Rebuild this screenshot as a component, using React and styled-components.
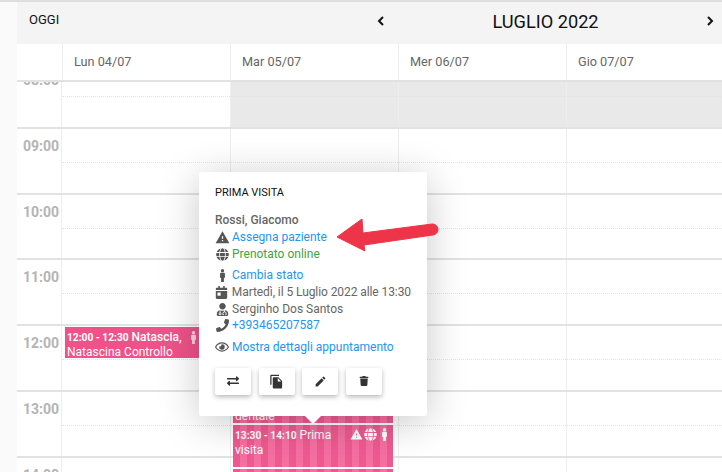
import React from 'react'
import styled, { createGlobalStyle } from 'styled-components'
import { FaGlobe, FaMale, FaPhone, FaRegEye, FaExchangeAlt, FaTrash, FaUserMd, FaCalendarDay } from 'react-icons/fa'
import { MdWarning, MdFileCopy, MdEdit } from 'react-icons/md'

const Global = createGlobalStyle`
  html, body { margin: 0; height: 100%; overflow: hidden; background: #fafafa; }
  body { font-family: Roboto, "Liberation Sans", sans-serif; }
  * { box-sizing: border-box; }
`

const Page = styled.div`
  display: flex;
  height: 472px;
  border-top: 2px solid #dedede;
`
const Side = styled.div`
  width: 17px;
  flex: none;
  background: #fafafa;
`
const Main = styled.div`
  position: relative;
  flex: 1;
  min-width: 0;
  display: flex;
  flex-direction: column;
  overflow: hidden;
  background: #fff;
`
const Toolbar = styled.div`
  height: 42px;
  flex: none;
  display: flex;
  align-items: center;
  justify-content: space-between;
  padding: 0 3px 4px 12px;
  background: #f4f4f4;
  color: #111;
`
const Today = styled.div`
  font-size: 13px;
  margin-top: -3px;
`
const Month = styled.div`
  width: 347px;
  display: flex;
  align-items: center;
  justify-content: space-between;
  font-size: 18.2px;
`
const Chevron = styled.svg`
  width: 18px;
  height: 18px;
  fill: none;
  stroke: currentColor;
  stroke-width: 2;
`
const DaysHead = styled.div`
  height: 38px;
  flex: none;
  display: grid;
  grid-template-columns: 46px repeat(4, 168px);
  border-bottom: 2px solid #e2e2e2;
  background: #fff;
  position: relative;
  z-index: 1;
`
const DayName = styled.div`
  border-right: 1px solid #eee;
  padding: 10px 0 0 11px;
  font-size: 12.7px;
  color: #666;
`
const Body = styled.div`
  margin-top: -19px;
`
const Row = styled.div`
  height: 65.8px;
  display: grid;
  grid-template-columns: 45px 169px repeat(3, 168px);
  border-bottom: 2px solid #e2e2e2;
`
const Hour = styled.div`
  border-right: 1px solid #eee;
  padding: 9px 0 0 6px;
  font-size: 14px;
  line-height: 16px;
  font-weight: 700;
  color: #b4b4b4;
`
const Cell = styled.div`
  position: relative;
  border-right: 1px solid #eee;
  background: ${p => p.$closed ? '#e9e9e9' : '#fff'};
  &::after {
    content: '';
    position: absolute;
    left: 0;
    right: 0;
    top: 33px;
    border-top: 1px dotted #e4e4e4;
  }
`
const Event = styled.div`
  position: absolute;
  z-index: 1;
  left: ${p => p.$left}px;
  top: ${p => p.$top}px;
  width: ${p => p.$width}px;
  height: ${p => p.$height}px;
  padding: ${p => p.$pad || 3}px 2px 0 2px;
  color: #fff;
  font-size: 12px;
  line-height: 15px;
  overflow: hidden;
  background: ${p => p.$striped
    ? 'repeating-linear-gradient(90deg, #ee5a90 0 7px, #f56fa1 7px 14px)'
    : '#ef5289'};
  b { font-weight: 700; font-size: 10.2px; }
  strong { font-weight: 500; }
`
const EventIcons = styled.div`
  float: right;
  display: flex;
  gap: 1px;
  align-items: center;
  margin-right: ${p => p.$gap}px;
  font-size: 13px;
  height: 14px;
  opacity: ${p => p.$faded ? 0.75 : 1};
`
const Popover = styled.div`
  position: absolute;
  z-index: 2;
  left: 182px;
  top: 170px;
  width: 228px;
  height: 244px;
  padding: 12px 16px;
  background: #fff;
  border-radius: 2px;
  box-shadow: 0 6px 40px rgba(0, 0, 0, .22);
  font-size: 12px;
  line-height: 17px;
  color: #666;
  &::after {
    content: '';
    position: absolute;
    left: 106px;
    bottom: -8px;
    border-left: 8px solid transparent;
    border-right: 8px solid transparent;
    border-top: 8px solid #fff;
  }
`
const PopTitle = styled.div`
  font-size: 11px;
  color: #111;
  margin-bottom: 11px;
`
const Name = styled.div`
  font-weight: 500;
`
const Group = styled.div`
  margin-top: ${p => p.$gap}px;
`
const Line = styled.div`
  display: flex;
  align-items: center;
  height: 16.7px;
  gap: 3px;
  white-space: nowrap;
  letter-spacing: ${p => p.$tight ? '-0.08px' : '0'};
  color: ${p => p.$color || '#666'};
  svg { flex: none; color: #555; }
`
const IconSlot = styled.span`
  width: 14px;
  display: flex;
  justify-content: center;
  font-size: ${p => p.$size || 13}px;
`
const Actions = styled.div`
  display: flex;
  gap: 7.5px;
  margin-top: 12px;
`
const Action = styled.div`
  width: 36px;
  height: 27px;
  display: flex;
  align-items: center;
  justify-content: center;
  border-radius: 2px;
  background: #fff;
  color: #333;
  font-size: ${p => p.$size || 12}px;
  box-shadow: 0 2px 5px rgba(0, 0, 0, .28);
`
const Arrow = styled.svg`
  position: absolute;
  z-index: 3;
  left: 319px;
  top: 216px;
`

const HOURS = ['08:00', '09:00', '10:00', '11:00', '12:00', '13:00', '14:00']

export default function App() {
  return (
    <Page>
      <Global />
      <Side />
      <Main>
        <Toolbar>
          <Today>OGGI</Today>
          <Month>
            <Chevron viewBox="0 0 18 18"><path d="M11 5 L7 9 L11 13" /></Chevron>
            LUGLIO 2022
            <Chevron viewBox="0 0 18 18"><path d="M7 5 L11 9 L7 13" /></Chevron>
          </Month>
        </Toolbar>
        <DaysHead>
          <DayName />
          <DayName>Lun 04/07</DayName>
          <DayName>Mar 05/07</DayName>
          <DayName>Mer 06/07</DayName>
          <DayName>Gio 07/07</DayName>
        </DaysHead>
        <Body>
          {HOURS.map((h, i) => (
            <Row key={h}>
              <Hour>{h}</Hour>
              {[0, 1, 2, 3].map(d => (
                <Cell key={d} $closed={i === 0 && d > 0}>
                  {h === '12:00' && d === 0 && (
                    <Event $left={3} $top={1} $width={163} $height={31}>
                      <EventIcons $gap={26} $faded><FaMale /></EventIcons>
                      <b>12:00 - 12:30</b> <strong>Natascia,</strong> Natascina Controllo
                    </Event>
                  )}
                  {h === '13:00' && d === 1 && (
                    <>
                      <Event $left={2} $top={-12} $width={160} $height={43} $pad={29} $striped>dentale</Event>
                      <Event $left={2} $top={33} $width={160} $height={42} $striped>
                        <EventIcons $gap={0}><MdWarning /><FaGlobe /><FaMale /></EventIcons>
                        <b>13:30 - 14:10</b> Prima visita
                      </Event>
                    </>
                  )}
                  {h === '14:00' && d === 1 && (
                    <Event $left={2} $top={11} $width={160} $height={30} $striped />
                  )}
                </Cell>
              ))}
            </Row>
          ))}
        </Body>

        <Popover>
          <PopTitle>PRIMA VISITA</PopTitle>
          <Name>Rossi, Giacomo</Name>
          <Line $color="#2196f3"><IconSlot $size={15}><MdWarning /></IconSlot>Assegna paziente</Line>
          <Line $color="#43a047"><IconSlot><FaGlobe /></IconSlot>Prenotato online</Line>
          <Group $gap={5}>
            <Line $color="#2196f3"><IconSlot><FaMale /></IconSlot>Cambia stato</Line>
            <Line $tight><IconSlot><FaCalendarDay /></IconSlot>Martedì, il 5 Luglio 2022 alle 13:30</Line>
            <Line><IconSlot><FaUserMd /></IconSlot>Serginho Dos Santos</Line>
            <Line $color="#2196f3"><IconSlot><FaPhone /></IconSlot>+393465207587</Line>
          </Group>
          <Group $gap={5}>
            <Line $color="#2196f3"><IconSlot $size={14}><FaRegEye /></IconSlot>Mostra dettagli appuntamento</Line>
          </Group>
          <Actions>
            <Action><FaExchangeAlt /></Action>
            <Action $size={15}><MdFileCopy /></Action>
            <Action $size={13}><MdEdit /></Action>
            <Action $size={10}><FaTrash /></Action>
          </Actions>
        </Popover>

        <Arrow width="104" height="35" viewBox="0 0 104 35">
          <path d="M1 19 L26 1 L27 15 L96 6 a5.5 5.5 0 0 1 1 11 L28 27 L29 33 Z" fill="#ee3448" stroke="#ee3448" strokeLinejoin="round" />
        </Arrow>
      </Main>
    </Page>
  )
}
